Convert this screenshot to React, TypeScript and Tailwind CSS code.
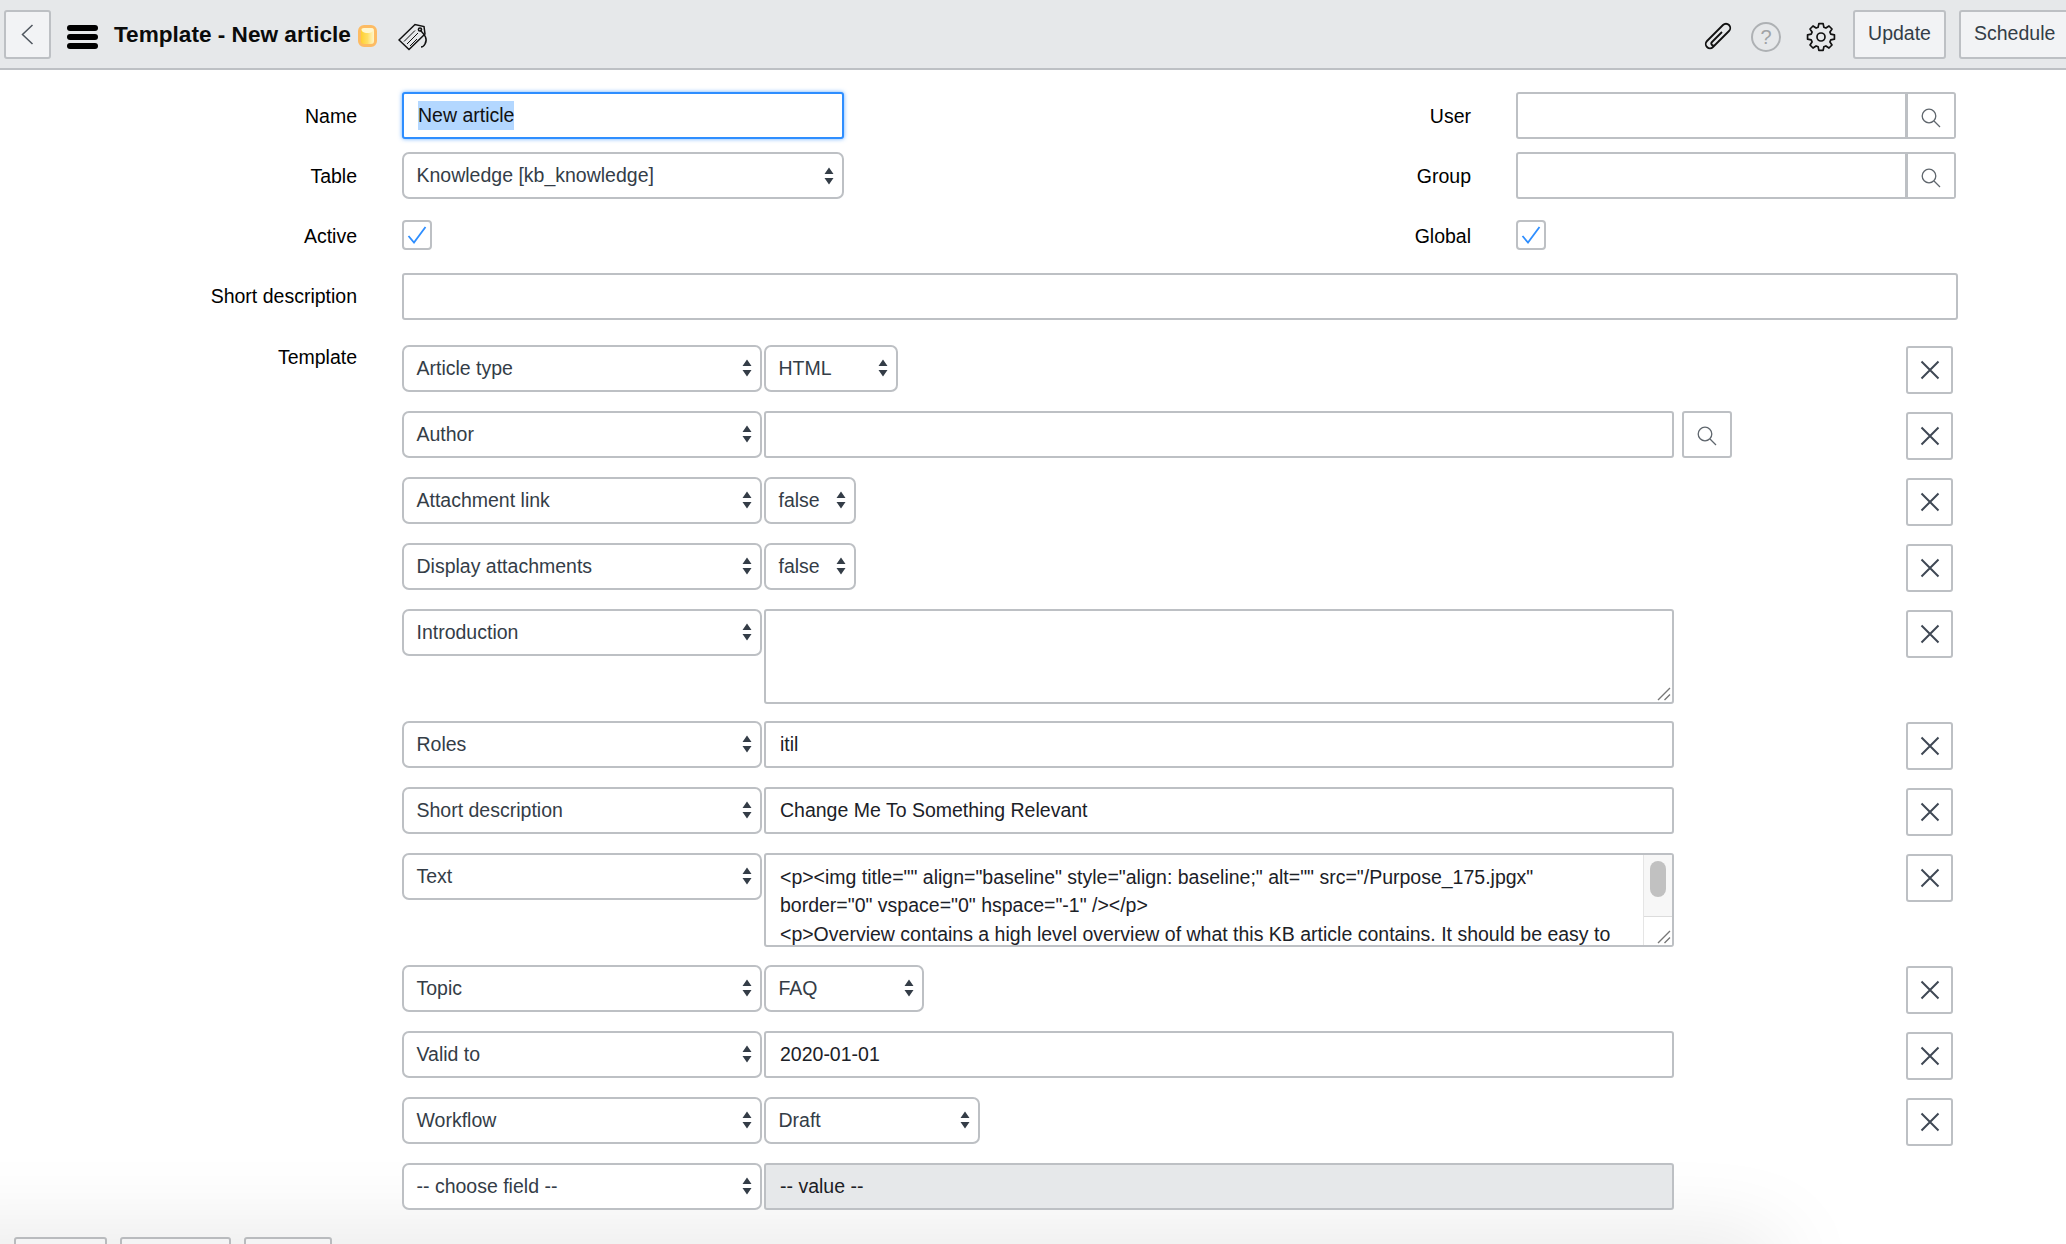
import React from "react";

const gearPath = (() => {
  const cx = 15, cy = 15, n = 8;
  const pts: string[] = [];
  for (let i = 0; i < n; i++) {
    const a = (i * 2 * Math.PI) / n - Math.PI / 2;
    const step = (2 * Math.PI) / n;
    const p = (r: number, t: number) => `${(cx + r * Math.cos(t)).toFixed(2)} ${(cy + r * Math.sin(t)).toFixed(2)}`;
    pts.push((i === 0 ? "M" : "L") + p(10.2, a - step * 0.36));
    pts.push("L" + p(13.6, a - step * 0.2));
    pts.push("L" + p(13.6, a + step * 0.2));
    pts.push("L" + p(10.2, a + step * 0.36));
  }
  return pts.join(" ") + " Z";
})();

function Arrows() {
  return (
    <svg width="10" height="18" viewBox="0 0 10 18" className="shrink-0">
      <path d="M5 0.5 L9.5 7 H0.5 Z M5 17.5 L9.5 11 H0.5 Z" fill="#343d47" />
    </svg>
  );
}

function Select({ text, className }: { text: string; className: string }) {
  return (
    <div className={`flex h-[47px] shrink-0 items-center justify-between rounded-[7px] border-2 border-[#bdc0c4] bg-white pl-[12.5px] pr-[8.5px] text-[#343d47] ${className}`}>
      <span>{text}</span>
      <Arrows />
    </div>
  );
}

function TextBox({ text, className = "w-[910px]" }: { text?: string; className?: string }) {
  return (
    <div className={`flex h-[47px] shrink-0 items-center rounded-[3px] border-2 border-[#bdc0c4] bg-white pl-[14px] text-[#1c2127] ${className}`}>
      {text}
    </div>
  );
}

function SearchIcon() {
  return (
    <svg width="20" height="20" viewBox="0 0 20 20" fill="none" stroke="#5f666d" strokeWidth="1.3">
      <circle cx="8" cy="8" r="6.8" />
      <path d="M13 13 L19 19" />
    </svg>
  );
}

function Grip() {
  return (
    <svg width="14" height="14" viewBox="0 0 14 14" className="absolute bottom-[1px] right-[1px]" stroke="#777" strokeWidth="1.4">
      <path d="M1 13 L13 1 M7.5 13 L13 7.5" />
    </svg>
  );
}

function Remove() {
  return (
    <div className="mt-px flex h-[48px] w-[47px] shrink-0 items-center justify-center rounded-[3px] border-2 border-[#bdc0c4] bg-white">
      <svg width="20" height="20" viewBox="0 0 20 20" stroke="#3f4854" strokeWidth="2">
        <path d="M1.5 1.5 L18.5 18.5 M18.5 1.5 L1.5 18.5" />
      </svg>
    </div>
  );
}

function Check() {
  return (
    <div className="flex h-[30px] w-[30px] items-center justify-center rounded-[4px] border-2 border-[#bdc0c4] bg-white">
      <svg width="20" height="18" viewBox="0 0 20 18" fill="none" stroke="#2e8eff" strokeWidth="1.8">
        <path d="M1.5 10 L7 16.5 L18.5 1" />
      </svg>
    </div>
  );
}

function Lookup() {
  return (
    <div className="flex w-[440px]">
      <div className="h-[47px] w-[392px] rounded-l-[3px] border-2 border-r-[3px] border-[#bdc0c4] bg-white" />
      <div className="flex h-[47px] w-[48px] items-center justify-center rounded-r-[3px] border-2 border-l-0 border-[#bdc0c4] bg-white pt-1">
        <SearchIcon />
      </div>
    </div>
  );
}

function Row({ field, children, rowClass }: { field: string; children: React.ReactNode; rowClass: string }) {
  return (
    <div className={`flex items-start pl-[402px] ${rowClass}`}>
      <Select text={field} className="w-[360px]" />
      <div className="ml-[2px] w-[1142px] shrink-0">{children}</div>
      <Remove />
    </div>
  );
}

const lbl = "shrink-0 pt-[1.5px] text-right text-black";

export default function App() {
  return (
    <div className="relative h-[1244px] w-[2066px] overflow-hidden bg-white text-[19.5px] font-['Liberation_Sans',Arial,sans-serif]">
      <div className="pointer-events-none absolute left-[-100px] top-[1244px] h-[60px] w-[1875px] shadow-[0_0_90px_rgba(0,0,0,0.13)]" />

      <header className="relative flex h-[70px] items-start overflow-hidden border-b-2 border-[#bdc0c4] bg-[#e6e8ea] pt-[10px]">
        <div className="ml-[4px] flex h-[49px] w-[47px] items-center justify-center rounded-[3px] border-2 border-[#bdc0c4] bg-[#f2f3f5]">
          <svg width="13" height="21" viewBox="0 0 13 21" fill="none" stroke="#4f565e" strokeWidth="1.5">
            <path d="M11.5 1 L1.5 10.5 L11.5 20" />
          </svg>
        </div>
        <div className="ml-[16px] mt-[15px] flex w-[31px] flex-col gap-[3.5px]">
          <div className="h-[5.5px] rounded-full bg-black" />
          <div className="h-[5.5px] rounded-full bg-black" />
          <div className="h-[5.5px] rounded-full bg-black" />
        </div>
        <h1 className="ml-[16px] mt-[11px] text-[22.6px] font-bold leading-[28px] text-[#0b0b0b]">Template - New article</h1>
        <div className="relative ml-[7px] mt-[15px] h-[22px] w-[19px] overflow-hidden rounded-[6px] border-[3px] border-[#fdbb63] bg-gradient-to-r from-[#ffcf2e] via-[#ffdf62] to-[#fff6c8]">
          <div className="h-[5px] rounded-b-[5px] bg-[#fff7cf]" />
        </div>
        <svg width="30" height="28" viewBox="0 0 30 28" fill="none" stroke="#111" strokeWidth="1.5" className="ml-[21px] mt-[13px]">
          <path d="M1 17 L17 1.5 L26 3.5 L27 11 L11 26.5 Z" />
          <path d="M6 18.5 L17 7.5 M9 21 L20 10 M12 23 L19 16" strokeWidth="1" />
          <circle cx="22" cy="6.5" r="1.6" />
          <path d="M22 7 C27 12 30 16 27 21 C26 23 24 24 23 24" />
        </svg>
        <div className="ml-auto flex items-start">
          <svg width="30" height="30" viewBox="0 0 30 30" fill="none" stroke="#111" strokeWidth="1.8" className="mt-[12px]">
            <path d="M19 10 L9 20 A2.1 2.1 0 0 0 12 23 L26 9 A4.24 4.24 0 0 0 20 3 L4 19 A4.24 4.24 0 0 0 10 25 L16 19" />
          </svg>
          <div className="ml-[18px] mt-[12px] flex h-[30px] w-[30px] items-center justify-center rounded-full border-2 border-[#aeb1b4] text-[20px] text-[#a0a3a6]">?</div>
          <svg width="30" height="30" viewBox="0 0 30 30" fill="none" stroke="#111" strokeWidth="1.7" strokeLinejoin="round" className="ml-[25px] mt-[12px]">
            <path d={gearPath} />
            <circle cx="15" cy="15" r="4" />
          </svg>
          <div className="ml-[17px] flex h-[49px] w-[93px] items-center justify-center rounded-[3px] border-2 border-[#bdc0c4] bg-[#f2f3f5] pb-[1px] text-[#343d47]">Update</div>
          <div className="ml-[13px] -mr-[12px] flex h-[49px] w-[119px] items-center rounded-[3px] border-2 border-[#bdc0c4] bg-[#f2f3f5] pb-[1px] pl-[13px] text-[#343d47]">Schedule</div>
        </div>
      </header>

      <main className="relative">
        <div className="flex items-center pt-[22px]">
          <div className={`${lbl} w-[357px]`}>Name</div>
          <div className="ml-[45px] flex h-[47px] w-[442px] items-center rounded-[3px] border-2 border-[#2e8eff] bg-white pl-[14px] shadow-[0_0_4px_rgba(46,142,255,0.7)]">
            <span className="bg-[#b3d7ff] text-[#111]">New article</span>
          </div>
          <div className={`${lbl} w-[627px]`}>User</div>
          <div className="ml-[45px]"><Lookup /></div>
        </div>
        <div className="mt-[13px] flex items-center">
          <div className={`${lbl} w-[357px]`}>Table</div>
          <Select text="Knowledge [kb_knowledge]" className="ml-[45px] w-[442px]" />
          <div className={`${lbl} w-[627px]`}>Group</div>
          <div className="ml-[45px]"><Lookup /></div>
        </div>
        <div className="mt-[21px] flex items-center">
          <div className={`${lbl} w-[357px]`}>Active</div>
          <div className="ml-[45px] w-[442px]"><Check /></div>
          <div className={`${lbl} w-[627px]`}>Global</div>
          <div className="ml-[45px]"><Check /></div>
        </div>
        <div className="mt-[22px] flex items-center">
          <div className={`${lbl} w-[357px]`}>Short description</div>
          <div className="ml-[45px] h-[47px] w-[1556px] rounded-[3px] border-2 border-[#bdc0c4] bg-white" />
        </div>

        <div className="relative mt-[25px]">
          <div className="absolute left-0 top-0 w-[357px] text-right leading-[24px] text-black">Template</div>
          <Row field="Article type" rowClass="h-[47px] mb-[19px]"><Select text="HTML" className="w-[134px]" /></Row>
          <Row field="Author" rowClass="h-[47px] mb-[19px]">
            <div className="flex gap-[8px]">
              <TextBox />
              <div className="flex h-[47px] w-[50px] shrink-0 items-center justify-center rounded-[3px] border-2 border-[#bdc0c4] bg-white pt-1"><SearchIcon /></div>
            </div>
          </Row>
          <Row field="Attachment link" rowClass="h-[47px] mb-[19px]"><Select text="false" className="w-[92px]" /></Row>
          <Row field="Display attachments" rowClass="h-[47px] mb-[19px]"><Select text="false" className="w-[92px]" /></Row>
          <Row field="Introduction" rowClass="h-[95px] mb-[17px]">
            <div className="relative h-[95px] w-[910px] rounded-[3px] border-2 border-[#bdc0c4] bg-white"><Grip /></div>
          </Row>
          <Row field="Roles" rowClass="h-[47px] mb-[19px]"><TextBox text="itil" /></Row>
          <Row field="Short description" rowClass="h-[47px] mb-[19px]"><TextBox text="Change Me To Something Relevant" /></Row>
          <Row field="Text" rowClass="h-[94px] mb-[18px]">
            <div className="relative h-[94px] w-[910px] overflow-hidden rounded-[3px] border-2 border-[#bdc0c4] bg-white pl-[14px] pt-[8px] leading-[28.5px] text-[#1c2127]">
              <div className="whitespace-nowrap">{'<p><img title="" align="baseline" style="align: baseline;" alt="" src="/Purpose_175.jpgx"'}</div>
              <div className="whitespace-nowrap">{'border="0" vspace="0" hspace="-1" /></p>'}</div>
              <div className="whitespace-nowrap">{'<p>Overview contains a high level overview of what this KB article contains. It should be easy to'}</div>
              <div className="absolute bottom-0 right-0 top-0 w-[29px] border-l border-[#e5e5e5] bg-[#f7f7f7]">
                <div className="ml-[6px] mt-[6px] h-[36px] w-[16px] rounded-full bg-[#c1c1c1]" />
                <div className="absolute bottom-0 left-0 right-0 h-[29px] border-t border-[#dcdcdc] bg-white" />
              </div>
              <Grip />
            </div>
          </Row>
          <Row field="Topic" rowClass="h-[47px] mb-[19px]"><Select text="FAQ" className="w-[160px]" /></Row>
          <Row field="Valid to" rowClass="h-[47px] mb-[19px]"><TextBox text="2020-01-01" /></Row>
          <Row field="Workflow" rowClass="h-[47px] mb-[19px]"><Select text="Draft" className="w-[216px]" /></Row>
          <div className="flex items-start pl-[402px]">
            <Select text="-- choose field --" className="w-[360px]" />
            <div className="ml-[2px] flex h-[47px] w-[910px] items-center rounded-[3px] border-2 border-[#bdc0c4] bg-[#e6e8ea] pl-[14px] text-[#1c2127]">-- value --</div>
          </div>
        </div>

        <div className="mt-[27px] flex pl-[14px]">
          <div className="h-[48px] w-[93px] rounded-[3px] border-2 border-[#b9bbbe] bg-[#f4f4f5]" />
          <div className="ml-[13px] h-[48px] w-[111px] rounded-[3px] border-2 border-[#b9bbbe] bg-[#f4f4f5]" />
          <div className="ml-[13px] h-[48px] w-[88px] rounded-[3px] border-2 border-[#b9bbbe] bg-[#f4f4f5]" />
        </div>
      </main>
    </div>
  );
}
